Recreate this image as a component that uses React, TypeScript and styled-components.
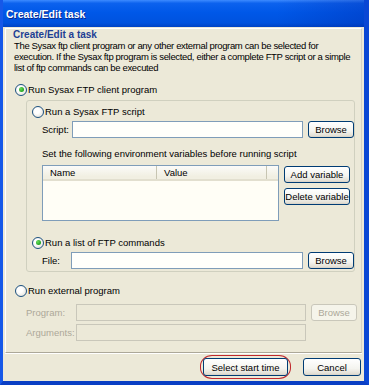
import React from "react";
import styled, { createGlobalStyle } from "styled-components";

const GlobalStyle = createGlobalStyle`
  html, body {
    margin: 0;
    padding: 0;
    background: #ece9d8;
  }
  * {
    box-sizing: border-box;
  }
`;

const Window = styled.div`
  width: 369px;
  height: 385px;
  display: flex;
  flex-direction: column;
  background: #0b4bd8;
  border-left: 3px solid #1658e8;
  border-right: 5px solid #0a47d4;
  border-bottom: 4px solid #0a3fc4;
  font-family: "Liberation Sans", Arial, sans-serif;
  font-size: 9.5px;
  color: #000;
  overflow: hidden;
`;

const TitleBar = styled.div`
  height: 27px;
  margin-left: -3px;
  margin-right: -5px;
  padding-left: 6px;
  display: flex;
  align-items: center;
  background:
    linear-gradient(90deg, rgba(0, 40, 170, 0) 75%, rgba(0, 40, 170, 0.35) 100%),
    linear-gradient(180deg, #3d8bff 0%, #0c62ee 12%, #0058e8 45%, #0052de 85%, #0043c4 100%);
`;

const Title = styled.span`
  color: #fff;
  font-weight: bold;
  font-size: 10.5px;
  text-shadow: 1px 1px 0 #0a2b8c;
`;

const Body = styled.div`
  flex: 1;
  display: flex;
  flex-direction: column;
  background: #ece9d8;
  padding-top: 1px;
`;

const Panel = styled.div`
  flex: 1;
  margin: 0 2px 0 2px;
  padding: 0 3px 0 8px;
  border-top: 1px solid #fff;
  border-left: 1px solid #fff;
  border-right: 1px solid #d6d2c2;
  border-bottom: 1px solid #aca899;
  box-shadow: 0 1px 0 #fff;
`;

const Heading = styled.div`
  color: #1e3f94;
  font-weight: bold;
  font-size: 10px;
  line-height: 11px;
  margin-left: -1px;
`;

const Description = styled.div`
  line-height: 11px;
  letter-spacing: -0.35px;
  white-space: nowrap;
`;

const RadioRow = styled.label<{ $top: number; $left?: number }>`
  display: flex;
  align-items: center;
  gap: 1px;
  height: 13px;
  margin-top: ${(p) => p.$top}px;
  margin-left: ${(p) => p.$left ?? 1}px;
  white-space: nowrap;
`;

const RadioDot = styled.span<{ $checked?: boolean }>`
  width: 12px;
  height: 12px;
  border-radius: 50%;
  border: 1px solid #1c5180;
  background: radial-gradient(circle at 40% 40%, #ffffff 30%, #dcd9ce 100%);
  display: flex;
  align-items: center;
  justify-content: center;
  &::after {
    content: "";
    display: ${(p) => (p.$checked ? "block" : "none")};
    width: 5px;
    height: 5px;
    border-radius: 50%;
    background: radial-gradient(circle at 35% 35%, #6ade5a, #21a121 70%);
  }
`;

const Group = styled.div`
  margin: 4px 3px 0 12px;
  padding: 4px 4px 2px 4px;
  border: 1px solid #d0d0bf;
  border-radius: 3px;
`;

const FieldRow = styled.div<{ $top: number; $left: number; $disabled?: boolean }>`
  display: flex;
  align-items: center;
  height: 17px;
  margin-top: ${(p) => p.$top}px;
  margin-left: ${(p) => p.$left}px;
  color: ${(p) => (p.$disabled ? "#aca899" : "#000")};
`;

const FieldLabel = styled.span<{ $width: number }>`
  width: ${(p) => p.$width}px;
  flex: none;
`;

const TextInput = styled.div<{ $width: number; $disabled?: boolean }>`
  width: ${(p) => p.$width}px;
  height: 17px;
  flex: none;
  border: 1px solid ${(p) => (p.$disabled ? "#c9c7ba" : "#7f9db9")};
  background: ${(p) => (p.$disabled ? "#ece9d8" : "#fffffb")};
`;

const Button = styled.button<{ $width: number; $disabled?: boolean }>`
  width: ${(p) => p.$width}px;
  height: 17px;
  flex: none;
  padding: 0;
  font: inherit;
  color: ${(p) => (p.$disabled ? "#aca899" : "#000")};
  border: 1px solid ${(p) => (p.$disabled ? "#c9c7ba" : "#003c74")};
  border-radius: 3px;
  background: ${(p) =>
    p.$disabled
      ? "#f5f4ea"
      : "linear-gradient(180deg, #ffffff 0%, #f4f4ef 60%, #e3e0d6 90%, #d6d0c5 100%)"};
`;

const Note = styled.div`
  margin: 10px 0 0 11px;
  line-height: 11px;
  white-space: nowrap;
`;

const VarsRow = styled.div`
  display: flex;
  gap: 5px;
  margin: 6px 0 0 11px;
`;

const ListView = styled.div`
  width: 241px;
  height: 56px;
  border: 1px solid #7f9db9;
  background: #fffef6;
`;

const ListHeader = styled.div`
  display: grid;
  grid-template-columns: 114px 110px 1fr;
  height: 15px;
  background: linear-gradient(180deg, #fbfbf9 0%, #f1efe2 80%);
  border-bottom: 2px solid #e2dfcf;
`;

const HeaderCell = styled.div`
  display: flex;
  align-items: center;
  padding-left: 7px;
  border-right: 1px solid #c7c5b2;
  &:last-child {
    border-right: none;
  }
`;

const ButtonColumn = styled.div`
  display: flex;
  flex-direction: column;
  gap: 5px;
  padding-top: 1px;
`;

const Footer = styled.div`
  height: 28px;
  display: flex;
  align-items: center;
  justify-content: flex-end;
  gap: 12px;
  padding-right: 3px;
`;

const Highlight = styled.div`
  padding: 2px;
  border: 1px solid #c0282d;
  border-radius: 12px / 11px;
`;

const FooterButton = styled(Button)`
  height: 18px;
`;

const Radio = ({
  label,
  checked,
  top,
  left,
}: {
  label: string;
  checked?: boolean;
  top: number;
  left?: number;
}) => (
  <RadioRow $top={top} $left={left}>
    <RadioDot $checked={checked} />
    {label}
  </RadioRow>
);

const App = () => {
  return (
    <>
      <GlobalStyle />
      <Window>
        <TitleBar>
          <Title>Create/Edit task</Title>
        </TitleBar>
        <Body>
          <Panel>
            <Heading>Create/Edit a task</Heading>
            <Description>
              The Sysax ftp client program or any other external program can be selected for
              <br />
              execution. If the Sysax ftp program is selected, either a complete FTP script or a simple
              <br />
              list of ftp commands can be executed
            </Description>
            <Radio checked top={10} label="Run Sysax FTP client program" />
            <Group>
              <Radio top={0} label="Run a Sysax FTP script" />
              <FieldRow $top={3} $left={11}>
                <FieldLabel $width={30}>Script:</FieldLabel>
                <TextInput $width={231} />
                <Button $width={46} style={{ marginLeft: 5 }}>
                  Browse
                </Button>
              </FieldRow>
              <Note>Set the following environment variables before running script</Note>
              <VarsRow>
                <ListView>
                  <ListHeader>
                    <HeaderCell>Name</HeaderCell>
                    <HeaderCell>Value</HeaderCell>
                    <HeaderCell />
                  </ListHeader>
                </ListView>
                <ButtonColumn>
                  <Button $width={66}>Add variable</Button>
                  <Button $width={66}>Delete variable</Button>
                </ButtonColumn>
              </VarsRow>
              <Radio checked top={15} label="Run a list of FTP commands" />
              <FieldRow $top={3} $left={11}>
                <FieldLabel $width={29}>File:</FieldLabel>
                <TextInput $width={232} />
                <Button $width={46} style={{ marginLeft: 5 }}>
                  Browse
                </Button>
              </FieldRow>
            </Group>
            <Radio top={12} label="Run external program" />
            <FieldRow $top={7} $left={12} $disabled>
              <FieldLabel $width={50}>Program:</FieldLabel>
              <TextInput $width={230} $disabled />
              <Button $width={46} $disabled style={{ marginLeft: 5 }}>
                Browse
              </Button>
            </FieldRow>
            <FieldRow $top={3} $left={12} $disabled>
              <FieldLabel $width={50}>Arguments:</FieldLabel>
              <TextInput $width={230} $disabled />
            </FieldRow>
          </Panel>
          <Footer>
            <Highlight>
              <FooterButton $width={85}>Select start time</FooterButton>
            </Highlight>
            <FooterButton $width={58}>Cancel</FooterButton>
          </Footer>
        </Body>
      </Window>
    </>
  );
};

export default App;
